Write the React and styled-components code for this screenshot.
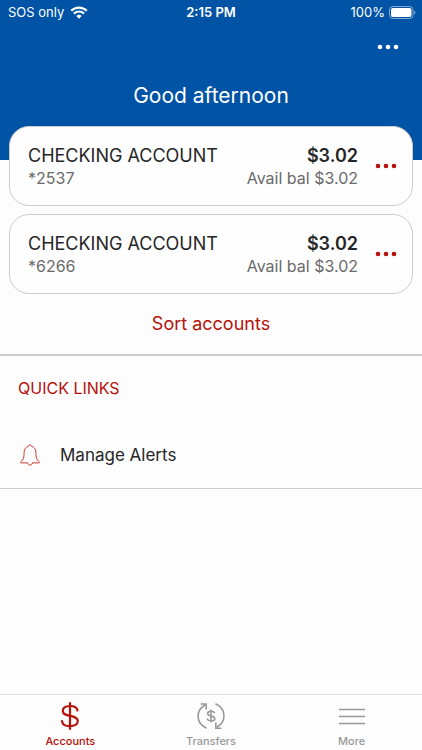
import styled, { createGlobalStyle } from 'styled-components';

const accounts = [
    { number: '*2537', name: 'CHECKING ACCOUNT', balance: '$3.02', available: '$3.02' },
    { number: '*6266', name: 'CHECKING ACCOUNT', balance: '$3.02', available: '$3.02' },
]

export default function App() {
    return (
        <>
            <GlobalStyle />
            <Page>
                <Header>
                    <StatusBar>
                        <Carrier>
                            SOS only
                            <WifiIcon />
                        </Carrier>
                        <Time>2:15 PM</Time>
                        <Battery>
                            100%
                            <BatteryIcon />
                        </Battery>
                    </StatusBar>
                    <NavBar>
                        <DotsButton aria-label="Options" color="#ffffff">
                            <Dots />
                        </DotsButton>
                    </NavBar>
                    <Greeting>Good afternoon</Greeting>
                </Header>
                <Main>
                    <AccountList>
                        {accounts.map(account => (
                            <AccountCard key={account.number}>
                                <div>
                                    <AccountName>{account.name}</AccountName>
                                    <Detail>{account.number}</Detail>
                                </div>
                                <Amounts>
                                    <Balance>{account.balance}</Balance>
                                    <Detail>Avail bal {account.available}</Detail>
                                </Amounts>
                                <DotsButton aria-label={`Options for account ${account.number}`} color="#b5120b">
                                    <Dots />
                                </DotsButton>
                            </AccountCard>
                        ))}
                    </AccountList>
                    <SortButton>Sort accounts</SortButton>
                    <QuickLinks>
                        <SectionTitle>QUICK LINKS</SectionTitle>
                        <QuickLink href="#alerts">
                            <BellIcon />
                            Manage Alerts
                        </QuickLink>
                    </QuickLinks>
                </Main>
                <TabBar>
                    <Tab href="#accounts" $active aria-current="page">
                        <DollarIcon />
                        Accounts
                    </Tab>
                    <Tab href="#transfers">
                        <TransferIcon />
                        Transfers
                    </Tab>
                    <Tab href="#more">
                        <MenuIcon />
                        More
                    </Tab>
                </TabBar>
            </Page>
        </>
    )
}

function Dots() {
    return (
        <svg width="22" height="6" viewBox="0 0 22 6" fill="currentColor" aria-hidden="true">
            <circle cx="3" cy="3" r="2.3" />
            <circle cx="11" cy="3" r="2.3" />
            <circle cx="19" cy="3" r="2.3" />
        </svg>
    )
}

function WifiIcon() {
    return (
        <svg width="18" height="13" viewBox="0 0 18 13" fill="currentColor" aria-hidden="true">
            <path d="M9 12.7 6.3 10a3.9 3.9 0 0 1 5.4 0z" />
            <path d="M3.9 7.6a7.2 7.2 0 0 1 10.2 0M1.2 4.8a11 11 0 0 1 15.6 0" fill="none" stroke="currentColor" strokeWidth="2.2" />
        </svg>
    )
}

function BatteryIcon() {
    return (
        <svg width="27" height="13" viewBox="0 0 27 13" fill="none" aria-hidden="true">
            <rect x="0.5" y="0.5" width="23.5" height="12" rx="3.5" stroke="#ffffff" strokeOpacity="0.5" />
            <rect x="2" y="2" width="20.5" height="9" rx="2" fill="#ffffff" />
            <path d="M25.2 4.4c1.7.6 1.7 3.6 0 4.2z" fill="#ffffff" fillOpacity="0.5" />
        </svg>
    )
}

function BellIcon() {
    return (
        <svg width="20" height="22" viewBox="0 0 20 22" fill="none" stroke="#c9392f" strokeWidth="1" strokeLinejoin="round" aria-hidden="true">
            <path d="M8.500 2.300C8.600 .3 11.400 .3 11.500 2.300C14.500 3.100 15.900 5.300 15.900 8.300C15.900 13.500 16.500 15.500 19.200 17.800C19.700 18.300 19.500 18.900 18.900 18.900H12.300C12.300 21.900 7.700 21.900 7.700 18.900H1.100C.5 18.900 .3 18.300 .8 17.800C3.500 15.500 4.100 13.500 4.100 8.300C4.100 5.300 5.500 3.100 8.500 2.300Z" />
        </svg>
    )
}

function DollarIcon() {
    return (
        <svg width="30" height="30" viewBox="0 0 30 30" fill="none" stroke="currentColor" strokeWidth="2.2" strokeLinecap="round" aria-hidden="true">
            <path d="M15 2v26" />
            <path d="M22.5 9.5C22 6.5 19 5 15 5s-7.200 1.700-7.200 5c0 6.800 15 3 15 10 0 3.400-3.500 5.200-7.800 5.200S7.300 23.300 7 20" />
        </svg>
    )
}

function TransferIcon() {
    return (
        <svg width="30" height="30" viewBox="0 0 30 30" fill="none" stroke="currentColor" strokeWidth="1.6" aria-hidden="true">
            <path d="M10.5 27.2C-.4 22.2-.6 9.600 9 4M4.600 3h5.600v5.600" />
            <path d="M19.5 2.800C30.4 7.800 30.6 20.4 21 26M25.4 27.200h-5.600v-5.600" />
            <path d="M15 8.500v13M18.600 12.200c-.3-1.300-1.600-2-3.600-2s-3.400.9-3.400 2.300c0 3.400 7.200 1.500 7.200 4.900 0 1.500-1.600 2.400-3.800 2.400s-3.600-.8-3.800-2.300" />
        </svg>
    )
}

function MenuIcon() {
    return (
        <svg width="30" height="30" viewBox="0 0 30 30" fill="none" stroke="currentColor" strokeWidth="1.5" aria-hidden="true">
            <path d="M2 8.500h26M2 15.500h26M2 22.500h26" />
        </svg>
    )
}

const GlobalStyle = createGlobalStyle`
    * {
        box-sizing: border-box;
    }

    body {
        margin: 0;
        background-color: #fdfdfd;
        color: #262626;
        font-family: Inter, 'Liberation Sans', sans-serif;
    }

    button {
        border: 0;
        padding: 0;
        background: none;
        font: inherit;
        cursor: pointer;
    }

    a {
        text-decoration: none;
    }

    svg {
        display: block;
        flex-shrink: 0;
    }
`;

const Page = styled.div`
    display: flex;
    flex-direction: column;
    min-height: 100vh;
`;

const Header = styled.header`
    padding-bottom: 50px;
    background-color: #0153a5;
    color: #ffffff;
`;

const StatusBar = styled.div`
    display: grid;
    grid-template-columns: 1fr auto 1fr;
    align-items: center;
    height: 24px;
    padding: 0 8px;
    font-size: 13px;
    line-height: 16px;
`;

const Carrier = styled.div`
    display: flex;
    align-items: center;
    gap: 6px;
`;

const Time = styled.div`
    font-weight: 600;
`;

const Battery = styled.div`
    display: flex;
    align-items: center;
    justify-content: flex-end;
    gap: 4px;
    margin-right: -2px;
`;

const NavBar = styled.div`
    display: flex;
    justify-content: flex-end;
    padding: 0 18px;
`;

const DotsButton = styled.button`
    display: flex;
    align-items: center;
    justify-content: center;
    height: 46px;
    padding: 0 5px;
    color: ${props => props.color};
`;

const Greeting = styled.h1`
    margin: 12px 0 0;
    font-size: 21px;
    font-weight: 400;
    line-height: 28px;
    text-align: center;
`;

const Main = styled.main`
    flex: 1;
    margin-top: -34px;
`;

const AccountList = styled.div`
    display: flex;
    flex-direction: column;
    gap: 8px;
    padding: 0 9px;
`;

const AccountCard = styled.article`
    display: flex;
    align-items: center;
    min-height: 80px;
    padding: 0 10px 0 18px;
    border: 1px solid #cccccc;
    border-radius: 20px;
    background-color: #fefefe;
`;

const AccountName = styled.h2`
    margin: 0;
    font-size: 18px;
    font-weight: 400;
    line-height: 24px;
`;

const Amounts = styled.div`
    flex: 1;
    margin-right: 12px;
    text-align: right;
`;

const Balance = styled.div`
    font-size: 18px;
    font-weight: 600;
    line-height: 24px;
`;

const Detail = styled.div`
    color: #6a6a6a;
    font-size: 16px;
    line-height: 20px;
`;

const SortButton = styled.button`
    display: block;
    width: 100%;
    height: 58px;
    margin-bottom: 2px;
    color: #b5120b;
    font-size: 18px;
`;

const QuickLinks = styled.section`
    padding: 0 18px;
    border-top: 2px solid #cccccc;
    border-bottom: 1px solid #cccccc;
`;

const SectionTitle = styled.h2`
    margin: 0 0 2px;
    color: #b5120b;
    font-size: 16px;
    font-weight: 400;
    line-height: 64px;
`;

const QuickLink = styled.a`
    display: flex;
    align-items: center;
    gap: 20px;
    height: 66px;
    padding-left: 2px;
    color: inherit;
    font-size: 17px;
`;

const TabBar = styled.nav`
    display: grid;
    grid-template-columns: repeat(3, 1fr);
    border-top: 1px solid #dedede;
`;

const Tab = styled.a`
    display: flex;
    flex-direction: column;
    align-items: center;
    gap: 3px;
    padding: 6px 0 2px;
    color: ${props => props.$active ? '#b5120b' : '#999999'};
    font-size: 11px;
    font-weight: 500;
    line-height: 14px;
`;
